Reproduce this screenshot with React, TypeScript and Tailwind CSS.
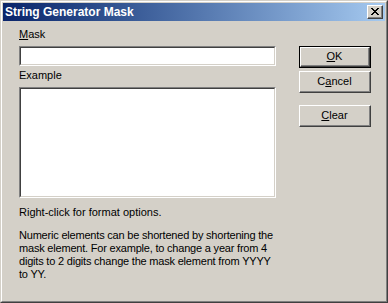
import React from 'react';

const font = "font-['Liberation_Sans',Arial,sans-serif]";

// Classic raised push button (3D bevel via nested borders)
const PushButton = ({ children, isDefault = false }: { children: React.ReactNode; isDefault?: boolean }) => {
  const bevel = (
    <div className="flex-1 flex border-t border-l border-t-white border-l-white border-b border-r border-b-[#404040] border-r-[#404040]">
      <div className="flex-1 flex items-center justify-center border-b border-r border-b-[#808080] border-r-[#808080] text-[11px] text-black">
        {children}
      </div>
    </div>
  );
  return (
    <button className={`w-[72px] h-[22px] flex p-0 bg-[#d4d0c8] ${isDefault ? 'border border-black' : ''}`}>
      {bevel}
    </button>
  );
};

// Sunken field (white client area)
const Sunken = ({ className = '' }: { className?: string }) => (
  <div className={`flex border-t border-l border-t-[#808080] border-l-[#808080] border-b border-r border-b-white border-r-white ${className}`}>
    <div className="flex-1 bg-white border-t border-l border-t-[#404040] border-l-[#404040] border-b border-r border-b-[#d4d0c8] border-r-[#d4d0c8]" />
  </div>
);

const App = () => {
  return (
    <div className={`w-[388px] h-[303px] bg-[#d4d0c8] ${font} border-t border-l border-t-[#d4d0c8] border-l-[#d4d0c8] border-b border-r border-b-[#404040] border-r-[#404040]`}>
      <div className="h-full flex flex-col border-t border-l border-t-white border-l-white border-b border-r border-b-[#808080] border-r-[#808080] p-px">
        {/* Title bar */}
        <div className="h-[18px] flex items-center justify-between pl-[2px] pr-[2px] bg-gradient-to-r from-[#0a246a] to-[#a6caf0]">
          <span className="text-white font-bold text-[12px] leading-none">String Generator Mask</span>
          <div className="w-[16px] h-[14px] flex bg-[#d4d0c8] border-t border-l border-t-white border-l-white border-b border-r border-b-[#404040] border-r-[#404040]">
            <div className="flex-1 flex items-center justify-center border-b border-r border-b-[#808080] border-r-[#808080]">
              <svg width="8" height="7" viewBox="0 0 8 7" shapeRendering="crispEdges">
                <path d="M0 0h2v1h-2zM6 0h2v1h-2zM1 1h2v1h-2zM5 1h2v1h-2zM2 2h4v1h-4zM3 3h2v1h-2zM2 4h4v1h-4zM1 5h2v1h-2zM5 5h2v1h-2zM0 6h2v1h-2zM6 6h2v1h-2z" fill="#000" />
              </svg>
            </div>
          </div>
        </div>

        {/* Body */}
        <div className="flex-1 flex gap-[23px] pl-[16px] pt-[7px] text-[11px] leading-[13px] text-black">
          <div className="w-[257px] flex flex-col">
            <div className="mb-[5px]"><span className="underline">M</span>ask</div>
            <Sunken className="h-[20px]" />
            <div className="mt-[3px] mb-[5px]">Example</div>
            <Sunken className="h-[111px]" />
            <div className="mt-[8px]">Right-click for format options.</div>
            <p className="mt-[10px] tracking-[-0.2px]">
              Numeric elements can be shortened by shortening the mask element. For example, to change a year from 4
              digits to 2 digits change the mask element from YYYY to YY.
            </p>
          </div>
          <div className="flex flex-col pt-[18px]">
            <PushButton isDefault><span className="underline">O</span>K</PushButton>
            <div className="mt-[3px]">
              <PushButton>C<span className="underline">a</span>ncel</PushButton>
            </div>
            <div className="mt-[12px]">
              <PushButton><span className="underline">C</span>lear</PushButton>
            </div>
          </div>
        </div>
      </div>
    </div>
  );
};

export default App;
